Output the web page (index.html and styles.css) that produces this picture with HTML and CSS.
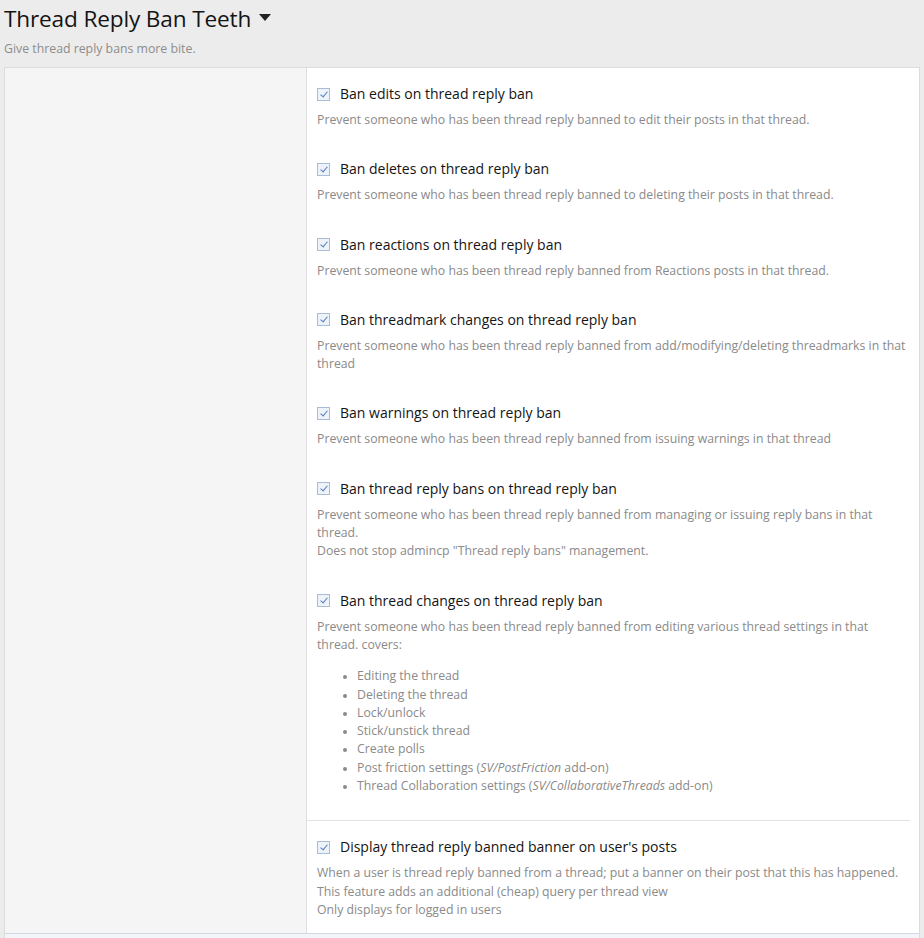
FILE: index.html
```html
<!DOCTYPE html>
<html>
<head>
<meta charset="utf-8">
<link rel="stylesheet" href="styles.css">
</head>
<body>
<div class="page">
  <div class="header">
    <h1 class="title">Thread Reply Ban Teeth <span class="caret"></span></h1>
    <div class="subtitle">Give thread reply bans more bite.</div>
  </div>
  <div class="block">
    <div class="row">
      <div class="side"></div>
      <div class="main">
        <div class="group">
          <div class="item">
            <label class="label"><span class="cb"></span>Ban edits on thread reply ban</label>
            <div class="desc">Prevent someone who has been thread reply banned to edit their posts in that thread.</div>
          </div>
          <div class="item">
            <label class="label"><span class="cb"></span>Ban deletes on thread reply ban</label>
            <div class="desc">Prevent someone who has been thread reply banned to deleting their posts in that thread.</div>
          </div>
          <div class="item">
            <label class="label"><span class="cb"></span>Ban reactions on thread reply ban</label>
            <div class="desc">Prevent someone who has been thread reply banned from Reactions posts in that thread.</div>
          </div>
          <div class="item">
            <label class="label"><span class="cb"></span>Ban threadmark changes on thread reply ban</label>
            <div class="desc">Prevent someone who has been thread reply banned from add/modifying/deleting threadmarks in that thread</div>
          </div>
          <div class="item">
            <label class="label"><span class="cb"></span>Ban warnings on thread reply ban</label>
            <div class="desc">Prevent someone who has been thread reply banned from issuing warnings in that thread</div>
          </div>
          <div class="item">
            <label class="label"><span class="cb"></span>Ban thread reply bans on thread reply ban</label>
            <div class="desc">Prevent someone who has been thread reply banned from managing or issuing reply bans in that thread.<br>Does not stop admincp "Thread reply bans" management.</div>
          </div>
          <div class="item">
            <label class="label"><span class="cb"></span>Ban thread changes on thread reply ban</label>
            <div class="desc">Prevent someone who has been thread reply banned from editing various thread settings in that thread. covers:
              <ul class="list">
                <li>Editing the thread</li>
                <li>Deleting the thread</li>
                <li>Lock/unlock</li>
                <li>Stick/unstick thread</li>
                <li>Create polls</li>
                <li>Post friction settings (<i>SV/PostFriction</i> add-on)</li>
                <li>Thread Collaboration settings (<i>SV/CollaborativeThreads</i> add-on)</li>
              </ul>
            </div>
          </div>
        </div>
        <div class="group last">
          <div class="item">
            <label class="label"><span class="cb"></span>Display thread reply banned banner on user's posts</label>
            <div class="desc">When a user is thread reply banned from a thread; put a banner on their post that this has happened.<br>This feature adds an additional (cheap) query per thread view<br>Only displays for logged in users</div>
          </div>
        </div>
      </div>
    </div>
    <div class="footer"></div>
  </div>
</div>
</body>
</html>
```

FILE: styles.css
```css
html, body {
  margin: 0;
  padding: 0;
  background: #ececec;
}
body {
  font-family: "Open Sans", "Noto Sans", sans-serif;
  color: #141414;
}
.page {
  padding: 0 4px;
}
.header {
  padding-top: 3px;
  height: 64px;
}
.title {
  margin: 0;
  font-weight: 400;
  font-size: 22.6px;
  line-height: 32px;
  letter-spacing: -0.15px;
  color: #141414;
}
.caret {
  display: inline-block;
  width: 0;
  height: 0;
  border-left: 6.5px solid transparent;
  border-right: 6.5px solid transparent;
  border-top: 7px solid #222;
  vertical-align: middle;
  margin-left: 2px;
  position: relative;
  top: -3px;
}
.subtitle {
  font-size: 12.3px;
  line-height: 16px;
  color: #8c8c8c;
  margin-top: 6px;
}
.block {
  border: 1px solid #dcdcdc;
  border-bottom: 0;
  background: #fff;
}
.row {
  display: flex;
}
.side {
  width: 301px;
  flex: none;
  background: #f5f5f5;
  border-right: 1px solid #dedede;
}
.main {
  flex: 1;
  padding: 0 9px 0 0;
}
.group {
  padding: 16px 2px 25px 10px;
  border-bottom: 1px solid #e2e2e2;
}
.group.last {
  padding: 16px 2px 14px 10px;
  border-bottom: 0;
}
.item + .item {
  margin-top: 30px;
}
.label {
  display: flex;
  align-items: center;
  font-size: 14px;
  line-height: 20px;
  color: #141414;
}
.cb {
  width: 11px;
  height: 11px;
  border: 1px solid #a9bcd8;
  background: #eef3fa;
  margin-right: 10px;
  flex: none;
  position: relative;
  box-sizing: content-box;
}
.cb::after {
  content: "";
  position: absolute;
  left: 3.5px;
  top: 1px;
  width: 3px;
  height: 6px;
  border-right: 1.5px solid #4f7dc0;
  border-bottom: 1.5px solid #4f7dc0;
  transform: rotate(40deg);
}
.desc {
  margin-top: 7px;
  font-size: 12.28px;
  line-height: 18.3px;
  color: #8a8a8a;
}
.list {
  margin: 13px 0 0;
  padding-left: 40px;
}
.list li {
  line-height: 18.3px;
}
.list li::marker {
  font-size: 10px;
}
.footer {
  border-top: 1px solid #d4d8e0;
  background: #f2f5fa;
  height: 6px;
}
```
